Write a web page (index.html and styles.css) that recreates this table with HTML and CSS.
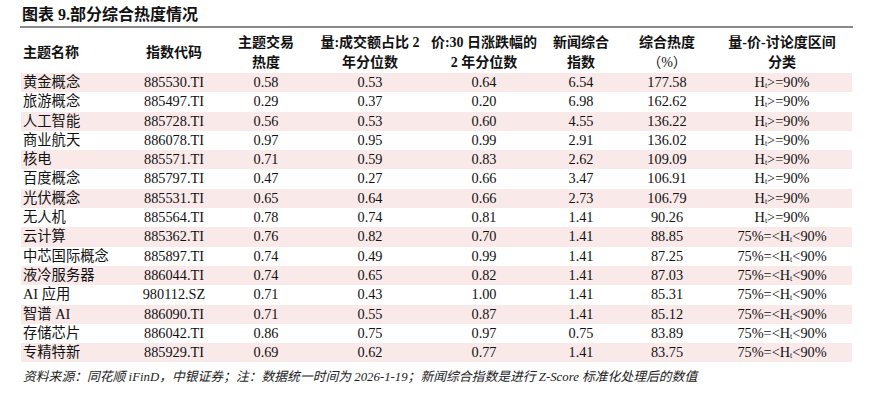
FILE: index.html
```html
<!DOCTYPE html>
<html lang="zh-CN">
<head>
<meta charset="utf-8">
<link rel="stylesheet" href="styles.css">
</head>
<body>
<div class="figure">
  <div class="title">图表 9.部分综合热度情况</div>
  <table class="tbl">
    <colgroup>
      <col class="c1"><col class="c2"><col class="c3"><col class="c4"><col class="c5"><col class="c6"><col class="c7"><col class="c8">
    </colgroup>
    <thead>
      <tr>
        <th class="left">主题名称</th>
        <th>指数代码</th>
        <th>主题交易<br>热度</th>
        <th>量:成交额占比 2<br>年分位数</th>
        <th>价:30 日涨跌幅的<br>2 年分位数</th>
        <th>新闻综合<br>指数</th>
        <th>综合热度<br><span class="fw">（%）</span></th>
        <th>量-价-讨论度区间<br>分类</th>
      </tr>
    </thead>
    <tbody>
      <tr class="alt"><td class="left">黄金概念</td><td>885530.TI</td><td>0.58</td><td>0.53</td><td>0.64</td><td>6.54</td><td>177.58</td><td>H<sub>t</sub>&gt;=90%</td></tr>
      <tr><td class="left">旅游概念</td><td>885497.TI</td><td>0.29</td><td>0.37</td><td>0.20</td><td>6.98</td><td>162.62</td><td>H<sub>t</sub>&gt;=90%</td></tr>
      <tr class="alt"><td class="left">人工智能</td><td>885728.TI</td><td>0.56</td><td>0.53</td><td>0.60</td><td>4.55</td><td>136.22</td><td>H<sub>t</sub>&gt;=90%</td></tr>
      <tr><td class="left">商业航天</td><td>886078.TI</td><td>0.97</td><td>0.95</td><td>0.99</td><td>2.91</td><td>136.02</td><td>H<sub>t</sub>&gt;=90%</td></tr>
      <tr class="alt"><td class="left">核电</td><td>885571.TI</td><td>0.71</td><td>0.59</td><td>0.83</td><td>2.62</td><td>109.09</td><td>H<sub>t</sub>&gt;=90%</td></tr>
      <tr><td class="left">百度概念</td><td>885797.TI</td><td>0.47</td><td>0.27</td><td>0.66</td><td>3.47</td><td>106.91</td><td>H<sub>t</sub>&gt;=90%</td></tr>
      <tr class="alt"><td class="left">光伏概念</td><td>885531.TI</td><td>0.65</td><td>0.64</td><td>0.66</td><td>2.73</td><td>106.79</td><td>H<sub>t</sub>&gt;=90%</td></tr>
      <tr><td class="left">无人机</td><td>885564.TI</td><td>0.78</td><td>0.74</td><td>0.81</td><td>1.41</td><td>90.26</td><td>H<sub>t</sub>&gt;=90%</td></tr>
      <tr class="alt"><td class="left">云计算</td><td>885362.TI</td><td>0.76</td><td>0.82</td><td>0.70</td><td>1.41</td><td>88.85</td><td>75%=&lt;H<sub>t</sub>&lt;90%</td></tr>
      <tr><td class="left">中芯国际概念</td><td>885897.TI</td><td>0.74</td><td>0.49</td><td>0.99</td><td>1.41</td><td>87.25</td><td>75%=&lt;H<sub>t</sub>&lt;90%</td></tr>
      <tr class="alt"><td class="left">液冷服务器</td><td>886044.TI</td><td>0.74</td><td>0.65</td><td>0.82</td><td>1.41</td><td>87.03</td><td>75%=&lt;H<sub>t</sub>&lt;90%</td></tr>
      <tr><td class="left">AI 应用</td><td>980112.SZ</td><td>0.71</td><td>0.43</td><td>1.00</td><td>1.41</td><td>85.31</td><td>75%=&lt;H<sub>t</sub>&lt;90%</td></tr>
      <tr class="alt"><td class="left">智谱 AI</td><td>886090.TI</td><td>0.71</td><td>0.55</td><td>0.87</td><td>1.41</td><td>85.12</td><td>75%=&lt;H<sub>t</sub>&lt;90%</td></tr>
      <tr><td class="left">存储芯片</td><td>886042.TI</td><td>0.86</td><td>0.75</td><td>0.97</td><td>0.75</td><td>83.89</td><td>75%=&lt;H<sub>t</sub>&lt;90%</td></tr>
      <tr class="alt"><td class="left">专精特新</td><td>885929.TI</td><td>0.69</td><td>0.62</td><td>0.77</td><td>1.41</td><td>83.75</td><td>75%=&lt;H<sub>t</sub>&lt;90%</td></tr>
    </tbody>
  </table>
  <div class="source">资料来源：同花顺 iFinD，中银证券；注：数据统一时间为 2026-1-19；新闻综合指数是进行 Z-Score 标准化处理后的数值</div>
</div>
</body>
</html>
```

FILE: styles.css
```css
html, body {
  margin: 0;
  padding: 0;
  background: #ffffff;
}
body {
  font-family: "Liberation Serif", "Noto Sans CJK SC", serif;
  color: #111111;
}
.figure {
  width: 833px;
  margin-left: 20px;
  padding-top: 4px;
}
.title {
  font-size: 16px;
  font-weight: bold;
  line-height: 21px;
  height: 22px;
  padding-left: 2px;
  border-bottom: 2px solid #8a8a8a;
}
.tbl {
  width: 831px;
  margin-left: 1px;
  border-collapse: collapse;
  table-layout: fixed;
  font-size: 14.3px;
  border-bottom: 1.5px solid #3a3a3a;
}
.c1 { width: 107px; }
.c2 { width: 92px; }
.c3 { width: 92px; }
.c4 { width: 116px; }
.c5 { width: 112px; }
.c6 { width: 82px; }
.c7 { width: 90px; }
.c8 { width: 140px; }
.tbl th {
  font-size: 14px;
  font-weight: bold;
  line-height: 20px;
  height: 36px;
  padding: 5px 0 0 0;
  text-align: center;
  vertical-align: middle;
  white-space: nowrap;
}
.tbl .fw {
  font-weight: normal;
}
.tbl td {
  height: 19.3px;
  line-height: 19.3px;
  padding: 0;
  text-align: center;
  white-space: nowrap;
}
.tbl .left {
  text-align: left;
  padding-left: 2px;
}
.tbl tbody tr:last-child td {
  border-bottom: 4px solid #ffffff;
}
.tbl tr.alt td {
  background: #f9e9e9;
}
.tbl sub {
  font-size: 8px;
  line-height: 0;
  vertical-align: -1px;
}
.source {
  font-size: 12.8px;
  font-style: italic;
  line-height: 16px;
  padding-top: 3px;
  padding-left: 3px;
  white-space: nowrap;
  color: #222222;
}
```
